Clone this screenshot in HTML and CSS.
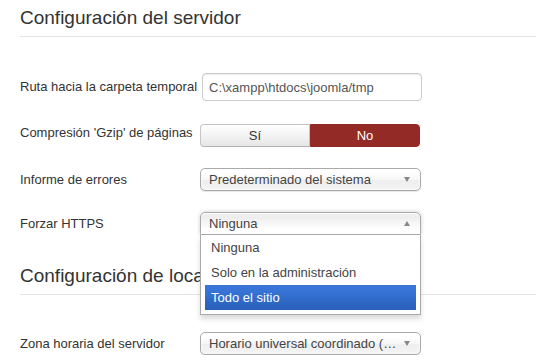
FILE: index.html
```html
<!DOCTYPE html>
<html lang="es">
<head>
<meta charset="UTF-8">
<meta name="viewport" content="width=device-width, initial-scale=1.0">
<title>Configuración global</title>
<link rel="stylesheet" href="styles.css">
</head>
<body>

<div class="page">
    <h2 class="legend">Configuración del servidor</h2>

    <div class="row row-input">
        <label class="row-label">Ruta hacia la carpeta temporal</label>
        <input type="text" class="text-input" value="C:\xampp\htdocs\joomla/tmp">
    </div>

    <div class="row row-toggle">
        <label class="row-label">Compresión 'Gzip' de páginas</label>
        <div class="toggle">
            <span class="toggle-btn">Sí</span>
            <span class="toggle-btn toggle-no">No</span>
        </div>
    </div>

    <div class="row row-errors">
        <label class="row-label">Informe de errores</label>
        <div class="select">
            <span>Predeterminado del sistema</span>
            <span class="arrow"></span>
        </div>
    </div>

    <div class="row row-https">
        <label class="row-label">Forzar HTTPS</label>
        <div class="select-wrap">
            <div class="select select-open">
                <span>Ninguna</span>
                <span class="arrow arrow-up"></span>
            </div>
            <div class="drop">
                <ul>
                    <li>Ninguna</li>
                    <li>Solo en la administración</li>
                    <li class="active">Todo el sitio</li>
                </ul>
            </div>
        </div>
    </div>

    <h2 class="legend legend-second">Configuración de localización</h2>

    <div class="row row-zone">
        <label class="row-label">Zona horaria del servidor</label>
        <div class="select">
            <span>Horario universal coordinado (…</span>
            <span class="arrow"></span>
        </div>
    </div>
</div>

</body>
</html>
```

FILE: styles.css
```css
body {
    margin: 0;
    padding: 0;
    background-color: #fff;
    color: #333;
    font-family: "Liberation Sans", Arial, sans-serif;
    font-size: 13px;
    overflow: hidden;
}
.page {
    padding: 6px 0 0 20px;
}
.legend {
    margin: 0;
    font-size: 19px;
    font-weight: normal;
    line-height: 24px;
    padding-bottom: 6px;
    border-bottom: 1px solid #e5e5e5;
    color: #333;
    white-space: nowrap;
}
.legend-second {
    margin-top: 29px;
}
.row {
    display: flex;
    align-items: center;
}
.row-label {
    width: 180px;
    line-height: 18px;
    flex-shrink: 0;
}
.row-input {
    margin-top: 36px;
}
.row-toggle {
    margin-top: 23px;
    align-items: flex-start;
}
.row-errors {
    margin-top: 21px;
}
.row-https {
    margin-top: 21px;
}
.row-zone {
    margin-top: 37px;
}
.text-input {
    box-sizing: border-box;
    width: 220px;
    height: 28px;
    margin: 0 0 0 2px;
    padding: 4px 6px;
    border: 1px solid #ccc;
    border-radius: 4px;
    font-family: inherit;
    font-size: 13px;
    color: #555;
    box-shadow: inset 0 1px 1px rgba(0, 0, 0, 0.075);
}
.toggle {
    display: flex;
    width: 220px;
    height: 23px;
}
.toggle-btn {
    flex: 1;
    box-sizing: border-box;
    line-height: 21px;
    text-align: center;
    border: 1px solid #c5c5c5;
    border-bottom-color: #b3b3b3;
    border-radius: 4px 0 0 4px;
    background: linear-gradient(#fff, #e6e6e6);
    color: #333;
}
.toggle-no {
    border: 1px solid #942a25;
    border-radius: 0 4px 4px 0;
    background: #942a25;
    color: #fff;
}
.select-wrap {
    position: relative;
}
.select {
    box-sizing: border-box;
    width: 221px;
    height: 23px;
    display: flex;
    align-items: center;
    justify-content: space-between;
    padding: 0 10px 0 8px;
    border: 1px solid #aaa;
    border-radius: 5px;
    background: linear-gradient(#fff 20%, #f6f6f6 50%, #eee 52%, #f4f4f4 100%);
    box-shadow: inset 0 0 3px #fff, 0 1px 1px rgba(0, 0, 0, 0.1);
    color: #444;
    white-space: nowrap;
}
.select-open {
    border-radius: 5px 5px 0 0;
    background: linear-gradient(#eee 20%, #fff 80%);
    box-shadow: 0 1px 0 #fff inset, 0 0 4px rgba(0, 0, 0, 0.2);
}
.arrow {
    width: 0;
    height: 0;
    border-left: 3.5px solid transparent;
    border-right: 3.5px solid transparent;
    border-top: 5px solid #888;
}
.arrow-up {
    border-top: 0;
    border-bottom: 5px solid #888;
}
.drop {
    position: absolute;
    top: 23px;
    left: 0;
    box-sizing: border-box;
    width: 221px;
    background: #fff;
    border: 1px solid #aaa;
    border-top: 0;
    box-shadow: 0 4px 5px rgba(0, 0, 0, 0.15);
    z-index: 10;
}
.drop ul {
    list-style: none;
    margin: 0 4px 4px 0;
    padding: 0 0 0 4px;
}
.drop li {
    padding: 5px 6px;
    line-height: 15px;
    color: #444;
    white-space: nowrap;
}
.drop li.active {
    background: linear-gradient(#3875d7 20%, #2a62bc 90%);
    color: #fff;
}
```
